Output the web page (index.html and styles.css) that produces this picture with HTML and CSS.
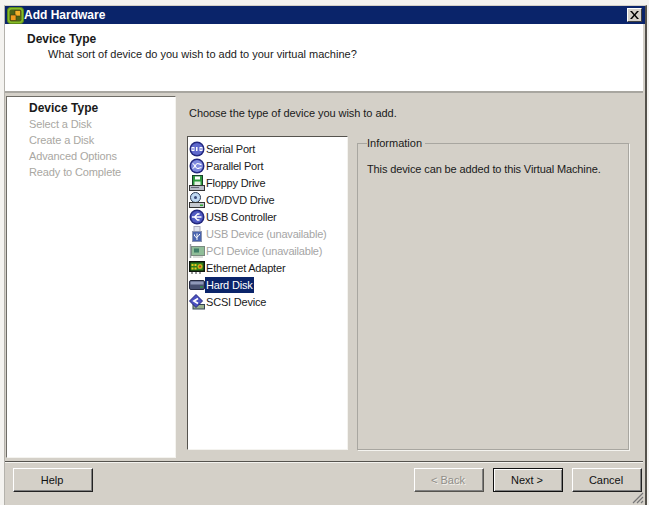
FILE: index.html
```html
<!DOCTYPE html>
<html lang="en">
<head>
<meta charset="utf-8">
<title>Add Hardware</title>
<link rel="stylesheet" href="styles.css">
</head>
<body>
<div class="window">
  <div class="titlebar">
    <svg class="logo" viewBox="0 0 17 17" width="17" height="17"><rect x="0.500" y="0.500" width="16" height="16" rx="3" fill="#86bc25" stroke="#5d8a18"/><rect x="2.500" y="2.500" width="12" height="12" rx="2" fill="#4e6418"/><rect x="8" y="3.500" width="5.500" height="5.500" fill="#f2b02a" stroke="#3a3a10" stroke-width="0.600"/><rect x="3.500" y="8" width="5.500" height="5.500" fill="#f09a1e" stroke="#3a3a10" stroke-width="0.600"/></svg>
    <span class="title-text">Add Hardware</span>
    <span class="close-btn"><svg viewBox="0 0 9 8" width="9" height="8"><path d="M0 0h2l2.500 3 2.500-3h2l-3.500 4 3.500 4h-2l-2.500-3-2.500 3h-2l3.500-4z" fill="#000"/></svg></span>
  </div>
  <header class="banner">
    <h1>Device Type</h1>
    <p>What sort of device do you wish to add to your virtual machine?</p>
  </header>
  <div class="main">
    <nav class="steps">
      <div class="step current">Device Type</div>
      <div class="step">Select a Disk</div>
      <div class="step">Create a Disk</div>
      <div class="step">Advanced Options</div>
      <div class="step">Ready to Complete</div>
    </nav>
    <section class="content">
      <p class="prompt">Choose the type of device you wish to add.</p>
      <div class="panes">
        <ul class="devices">
          <li><svg viewBox="0 0 16 16" width="16" height="16"><circle cx="8" cy="8" r="7.500" fill="#23287e"/><circle cx="8" cy="8" r="6" fill="#5f69cc"/><path d="M2.500 6h3v4h-3zM3.500 7v2h1V7zM7 6h1.500v4H7zM10.500 6h3v4h-3zM11.500 7v2h1V7z" fill="#fff" fill-rule="evenodd"/></svg><span>Serial Port</span></li>
          <li><svg viewBox="0 0 16 16" width="16" height="16"><circle cx="8" cy="8" r="7.500" fill="#23287e"/><circle cx="8" cy="8" r="6" fill="#7f8ade"/><path d="M3.500 5.500c2 0 3 5 5 5s2-1 4-1M3.500 10.500c2 0 3-5 5-5s2 1 4 1" fill="none" stroke="#fff" stroke-width="1.200"/></svg><span>Parallel Port</span></li>
          <li><svg viewBox="0 0 16 16" width="16" height="16"><rect x="3.500" y="0.500" width="10" height="10" fill="#2f9a3e" stroke="#17402a"/><rect x="6" y="1.500" width="5" height="3" fill="#fff"/><rect x="5.500" y="6.500" width="6" height="4" fill="#e4f2e4"/><rect x="0.500" y="10.500" width="15" height="5" fill="#b8bcc8" stroke="#333"/><rect x="2" y="12" width="8" height="1" fill="#667"/></svg><span>Floppy Drive</span></li>
          <li><svg viewBox="0 0 16 16" width="16" height="16"><circle cx="6.500" cy="5.500" r="5" fill="#bfd9f2" stroke="#2b3a55"/><circle cx="6.500" cy="5.500" r="1.500" fill="#3a4a7a"/><rect x="0.500" y="10.500" width="15" height="5" fill="#c4c8d0" stroke="#333"/><rect x="11" y="12.500" width="3" height="1.500" fill="#3a3"/></svg><span>CD/DVD Drive</span></li>
          <li><svg viewBox="0 0 16 16" width="16" height="16"><circle cx="8" cy="8" r="7.500" fill="#23287e"/><circle cx="8" cy="8" r="6" fill="#4f59c0"/><path d="M3 8h9.500M5.500 8l3-3h2M5.500 8l3 3h2" fill="none" stroke="#fff" stroke-width="1.300"/></svg><span>USB Controller</span></li>
          <li class="off"><svg viewBox="0 0 16 16" width="16" height="16"><rect x="5" y="0.500" width="6" height="5" fill="#e0e4ee" stroke="#aab"/><rect x="3.500" y="5.500" width="9" height="10" fill="#4a64ae" stroke="#8a94b0"/><path d="M8 14V7.500M8 12L5.500 10V8.500M8 11l2.500-2V8" fill="none" stroke="#fff"/></svg><span>USB Device (unavailable)</span></li>
          <li class="off"><svg viewBox="0 0 16 16" width="16" height="16"><path d="M1.500 1v14" stroke="#99a0a8" stroke-width="1.500"/><rect x="2.500" y="3.500" width="13" height="9" fill="#8fbd98" stroke="#7a8a80"/><rect x="5" y="5.500" width="5" height="4" fill="#3f7f68"/><path d="M4 14h10" stroke="#b8c0b8"/></svg><span>PCI Device (unavailable)</span></li>
          <li><svg viewBox="0 0 16 16" width="16" height="16"><rect x="0" y="1" width="16" height="11" fill="#0d160d"/><rect x="1.500" y="2.500" width="13" height="8" fill="#2e7f1a"/><path d="M2.500 4h2v2h-2zM5.500 4h2v2h-2zM2.500 7.500h2v2h-2zM5.500 7.500h2v2h-2z" fill="#e8c820"/><circle cx="11" cy="6.500" r="2.500" fill="#c8b020"/><circle cx="11" cy="6.500" r="1" fill="#c03018"/><path d="M3 12v2M7 12v2M11 12v2" stroke="#333"/></svg><span>Ethernet Adapter</span></li>
          <li class="selected"><svg viewBox="0 0 16 16" width="16" height="16"><rect x="0.500" y="3.500" width="15" height="9" rx="1.500" fill="#485070" stroke="#252a40"/><rect x="1.500" y="4.500" width="13" height="3" fill="#8f98b8"/><rect x="11" y="9.500" width="3" height="1" fill="#2a3"/></svg><span>Hard Disk</span></li>
          <li><svg viewBox="0 0 16 16" width="16" height="16"><rect x="4" y="10.500" width="11.500" height="4.500" fill="#9ab08c" stroke="#345"/><path d="M7 0.500L13.500 7 7 13.500 0.500 7z" fill="#4a50c0" stroke="#23287e"/><path d="M9 4.500L5 7l4 2.500" fill="none" stroke="#fff" stroke-width="1.800"/></svg><span>SCSI Device</span></li>
        </ul>
        <fieldset class="info">
          <legend>Information</legend>
          <p>This device can be added to this Virtual Machine.</p>
        </fieldset>
      </div>
    </section>
  </div>
  <footer class="footer">
    <button class="btn help" type="button">Help</button>
    <div class="nav-btns">
      <button class="btn" type="button" disabled>&lt; Back</button>
      <button class="btn default" type="button">Next &gt;</button>
      <button class="btn" type="button">Cancel</button>
    </div>
    <svg class="grip" viewBox="0 0 12 12" width="12" height="12"><path d="M11 1L1 11M11 5L5 11M11 9L9 11" stroke="#777" stroke-width="1.200"/></svg>
  </footer>
</div>
</body>
</html>
```
FILE: styles.css
```css
* { box-sizing: border-box; }
html, body { margin: 0; padding: 0; }
body {
  width: 649px;
  height: 505px;
  overflow: hidden;
  background: #f4f3f0;
  padding: 5px 2px 0 4px;
  font-family: "Liberation Sans", Arial, sans-serif;
  font-size: 11px;
  color: #1a1a1a;
}
.window {
  height: 500px;
  background: #d4d0c8;
  border-left: 1px solid #b4b2ac;
  border-right: 2px solid #55524c;
  border-top: 1px solid #d4d0c8;
  display: flex;
  flex-direction: column;
}
.titlebar {
  height: 18px;
  background: #0a246a;
  color: #fff;
  display: flex;
  align-items: center;
  padding: 0 3px 0 1px;
  flex: none;
}
.logo { flex: none; margin-left: 1px; }
.title-text { font-weight: 700; font-size: 12px; flex: 1; }
.close-btn {
  width: 15px;
  height: 14px;
  background: #d4d0c8;
  border: 1px solid;
  border-color: #fff #404040 #404040 #fff;
  display: flex;
  align-items: center;
  justify-content: center;
}
.banner {
  height: 69px;
  flex: none;
  background: #fff;
  margin-right: 2px;
  padding: 8px 0 0 22px;
  border-bottom: 2px solid #a8a6a0;
}
.banner h1 { margin: 0; font-size: 12px; font-weight: 700; line-height: 15px; }
.banner p { margin: 0 0 0 21px; line-height: 15px; }
.main { flex: 1; display: flex; padding: 3px 15px 3px 1px; min-height: 0; }
.steps {
  width: 170px;
  flex: none;
  background: #fff;
  border: 1px solid;
  border-color: #6e6c66 #f4f3ef #f4f3ef #6e6c66;
  padding: 3px 0 0 22px;
}
.step { height: 16px; line-height: 16px; color: #a9a7a2; letter-spacing: -0.120px; }
.step.current { color: #1a1a1a; font-weight: 700; font-size: 12px; letter-spacing: 0; }
.content { flex: 1; padding: 9px 0 8px 11px; display: flex; flex-direction: column; min-width: 0; }
.prompt { margin: 0 0 0 2px; line-height: 16px; height: 31px; letter-spacing: -0.050px; }
.panes { flex: 1; display: flex; gap: 9px; min-height: 0; }
.devices {
  width: 161px;
  flex: none;
  margin: 0;
  padding: 3px 0 0 1px;
  list-style: none;
  background: #fff;
  border: 1px solid;
  border-color: #55534e #f4f3ef #f4f3ef #55534e;
}
.devices li { height: 17px; display: flex; align-items: center; }
.devices svg { flex: none; }
.devices span { line-height: 16px; height: 16px; padding: 0 1px; letter-spacing: -0.200px; }
.devices .off span { color: #a5a5a5; }
.devices .selected span { background: #0a246a; color: #fff; }
.info {
  flex: 1;
  margin: 0 1px 0 0;
  padding: 0 9px;
  border: 1px solid #a8a6a0;
  box-shadow: 1px 1px 0 #f4f3ef;
  min-width: 0;
}
.info legend { padding: 0 3px 0 0; line-height: 14px; }
.info p { margin: 11px 0 0; line-height: 16px; letter-spacing: -0.120px; }
.footer {
  height: 44px;
  flex: none;
  margin-right: 2px;
  border-top: 1px solid #55534e;
  box-shadow: inset 0 1px 0 #f4f3ef;
  padding: 6px 1px 0 8px;
  display: flex;
  justify-content: space-between;
  align-items: flex-start;
  position: relative;
}
.nav-btns { display: flex; gap: 9px; }
.btn {
  width: 70px;
  height: 24px;
  padding: 0 2px 0 0;
  background: #d4d0c8;
  border: 1px solid;
  border-color: #fff #222 #222 #fff;
  box-shadow: inset -1px -1px 0 #808080;
  font: 11px "Liberation Sans", Arial, sans-serif;
  color: #111;
}
.btn.help { width: 80px; }
.btn:disabled { color: #908e89; text-shadow: 1px 1px 0 #f4f3ef; border-color: #fff #55534e #55534e #fff; }
.btn.default { outline: 1px solid #111; outline-offset: -1px; border-color: #111; box-shadow: inset 1px 1px 0 #fff, inset -1px -1px 0 #808080; }
.grip { position: absolute; right: -1px; bottom: 1px; }
```
